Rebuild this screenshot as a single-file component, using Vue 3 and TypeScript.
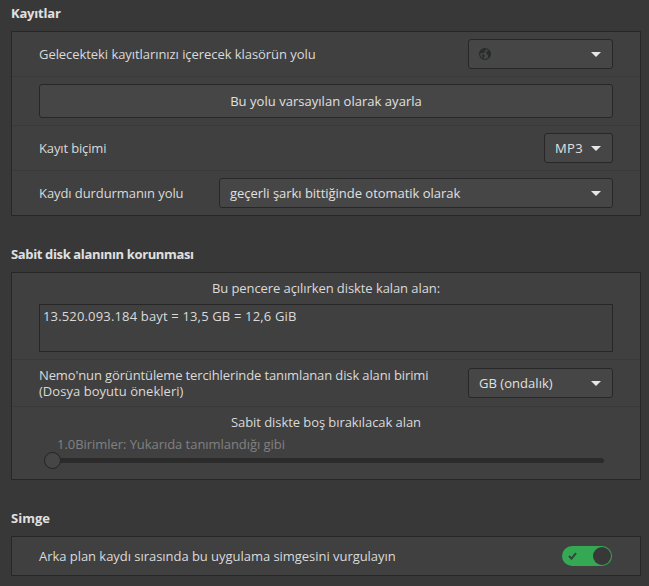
<script setup lang="ts">
import { ref } from 'vue'

const highlight = ref(true)
const format = ref('MP3')
const stopMode = ref('geçerli şarkı bittiğinde otomatik olarak')
const unit = ref('GB (ondalık)')
const freeSpace = ref('13.520.093.184 bayt = 13,5 GB = 12,6 GiB')
</script>

<template>
  <main class="page">
    <section>
      <h2 class="title t-rec">Kayıtlar</h2>
      <div class="panel">
        <div class="row h44">
          <span class="label t-path">Gelecekteki kayıtlarınızı içerecek klasörün yolu</span>
          <button class="select w145">
            <svg class="globe" width="12" height="12" viewBox="0 0 12 12">
              <circle cx="6" cy="6" r="5.400" fill="none" stroke="#292b2c" stroke-width="1.200" />
              <path
                d="M1 4C1.600 2.200 3.400.9 6 .8L7.400 1.400 6.300 2.300 6.600 3.200 5.300 3.900 4.700 5.100 3.500 5.300 2.300 4.900 1.700 5.700.8 5.600Z"
                fill="#292b2c"
              />
              <path
                d="M3 6.500 4.600 6.400 5.900 7.300 5.300 8.700 4.600 9.300 4.500 10.900 3.500 10 3.300 8.300Z"
                fill="#292b2c"
              />
              <path
                d="M7.400 4.300 8.500 3.100 10.200 2.700 11.200 4.500 11.300 6.800 10.300 9 9.300 9.400 8.800 7.400 8.600 6.300 7.200 5.700Z"
                fill="#292b2c"
              />
            </svg>
            <svg class="arrow" width="10" height="5" viewBox="0 0 10 5"><path d="M0 0h10L5 5z" /></svg>
          </button>
        </div>
        <div class="row h48">
          <button class="push t-default">Bu yolu varsayılan olarak ayarla</button>
        </div>
        <div class="row h44">
          <span class="label t-format">Kayıt biçimi</span>
          <button class="select w69">
            <span class="t-mp3">{{ format }}</span>
            <svg class="arrow" width="10" height="5" viewBox="0 0 10 5"><path d="M0 0h10L5 5z" /></svg>
          </button>
        </div>
        <div class="row h44">
          <span class="label t-stop">Kaydı durdurmanın yolu</span>
          <button class="select w394">
            <span class="t-mode">{{ stopMode }}</span>
            <svg class="arrow" width="10" height="5" viewBox="0 0 10 5"><path d="M0 0h10L5 5z" /></svg>
          </button>
        </div>
      </div>
    </section>

    <section>
      <h2 class="title t-disk">Sabit disk alanının korunması</h2>
      <div class="panel">
        <div class="row stack">
          <span class="label center t-left">Bu pencere açılırken diskte kalan alan:</span>
          <div class="box t-bytes">{{ freeSpace }}</div>
        </div>
        <div class="row h46">
          <span class="label">
            <span class="line t-nemo">Nemo'nun görüntüleme tercihlerinde tanımlanan disk alanı birimi</span>
            <span class="line t-prefix">(Dosya boyutu önekleri)</span>
          </span>
          <button class="select w145">
            <span class="t-unit">{{ unit }}</span>
            <svg class="arrow" width="10" height="5" viewBox="0 0 10 5"><path d="M0 0h10L5 5z" /></svg>
          </button>
        </div>
        <div class="row stack scale">
          <span class="label center t-keep">Sabit diskte boş bırakılacak alan</span>
          <span class="mark t-mark">1.0Birimler: Yukarıda tanımlandığı gibi</span>
          <div class="slider">
            <span class="knob"></span>
            <span class="track"></span>
          </div>
        </div>
      </div>
    </section>

    <section>
      <h2 class="title">Simge</h2>
      <div class="panel">
        <div class="row h38">
          <span class="label t-icon">Arka plan kaydı sırasında bu uygulama simgesini vurgulayın</span>
          <button class="switch" :class="{ on: highlight }" @click="highlight = !highlight">
            <svg class="check" width="9" height="8" viewBox="0 0 9 8">
              <path d="M1 4l2.500 2.600L8 1.200" fill="none" stroke="#30463a" stroke-width="2" />
            </svg>
            <span class="thumb"></span>
          </button>
        </div>
      </div>
    </section>
  </main>
</template>

<style>
body {
  background: #383838;
}
</style>

<style scoped>
.page {
  box-sizing: border-box;
  height: 586px;
  padding: 5px 8px 0 11px;
  display: flex;
  flex-direction: column;
  gap: 30px;
  overflow: hidden;
  background: #383838;
  color: #dadada;
  font: 13px/16px 'Open Sans', 'Noto Sans', sans-serif;
}
.title {
  margin: 0 0 10px;
  font-size: 13px;
  line-height: 16px;
  font-weight: 700;
  color: #e0e0e0;
}
.panel {
  border: 1px solid #272727;
  background: #404040;
}
.row {
  display: flex;
  align-items: center;
  justify-content: space-between;
  box-sizing: content-box;
  padding: 0 27px;
}
.row + .row {
  border-top: 1px solid #3a3a3a;
}
.h38 { height: 38px; }
.h44 { height: 44px; }
.h46 { height: 46px; }
.h48 { height: 48px; }
.label {
  white-space: nowrap;
}
.line {
  display: block;
}
.center {
  text-align: center;
}
button {
  box-sizing: border-box;
  margin: 0;
  font: inherit;
  color: #e0e0e0;
  border: 1px solid #272727;
  border-radius: 3px;
  background: #464646;
}
.select {
  height: 30px;
  padding: 0 11px 0 10px;
  display: flex;
  align-items: center;
  justify-content: space-between;
  white-space: nowrap;
}
.w69 { width: 69px; }
.w145 { width: 145px; }
.w394 { width: 394px; }
.arrow {
  fill: #e6e6e6;
  flex: none;
}
.push {
  width: 100%;
  height: 34px;
  padding: 0;
}
.stack {
  flex-direction: column;
  align-items: stretch;
  padding-top: 7px;
  padding-bottom: 7px;
}
.box {
  box-sizing: border-box;
  height: 48px;
  margin-top: 8px;
  padding: 3px;
  border: 1px solid #272727;
}
.scale {
  padding-bottom: 10px;
}
.mark {
  margin: 6px 0 0 18px;
  color: #808080;
}
.slider {
  display: flex;
  align-items: center;
  height: 17px;
  padding: 0 9px 0 5px;
}
.knob {
  box-sizing: border-box;
  flex: none;
  width: 17px;
  height: 17px;
  border: 1px solid #222;
  border-radius: 50%;
  background: #464646;
}
.track {
  flex: 1;
  height: 5px;
  border-radius: 0 3px 3px 0;
  background: #2b2b2b;
}
.switch {
  width: 50px;
  height: 20px;
  margin-right: 1px;
  padding: 0 1px 0 6px;
  display: flex;
  align-items: center;
  justify-content: space-between;
  border: 0;
  border-radius: 10px;
  background: #555;
}
.switch.on {
  background: #35a854;
}
.thumb {
  width: 18px;
  height: 18px;
  border-radius: 50%;
  background: #383838;
}
.t-rec { letter-spacing: -0.19px; }
.t-path { letter-spacing: -0.06px; }
.t-default { letter-spacing: 0.03px; }
.t-format { letter-spacing: -0.14px; }
.t-stop { letter-spacing: -0.08px; }
.t-mp3 { letter-spacing: 0.4px; }
.t-mode { letter-spacing: -0.03px; }
.t-disk { letter-spacing: -0.36px; }
.t-left { letter-spacing: -0.08px; }
.t-bytes { letter-spacing: 0.16px; }
.t-nemo { letter-spacing: -0.12px; }
.t-prefix { letter-spacing: 0.04px; }
.t-unit { letter-spacing: 0.04px; }
.t-keep { letter-spacing: -0.07px; }
.t-mark { letter-spacing: -0.05px; }
.t-icon { letter-spacing: -0.04px; }
</style>
